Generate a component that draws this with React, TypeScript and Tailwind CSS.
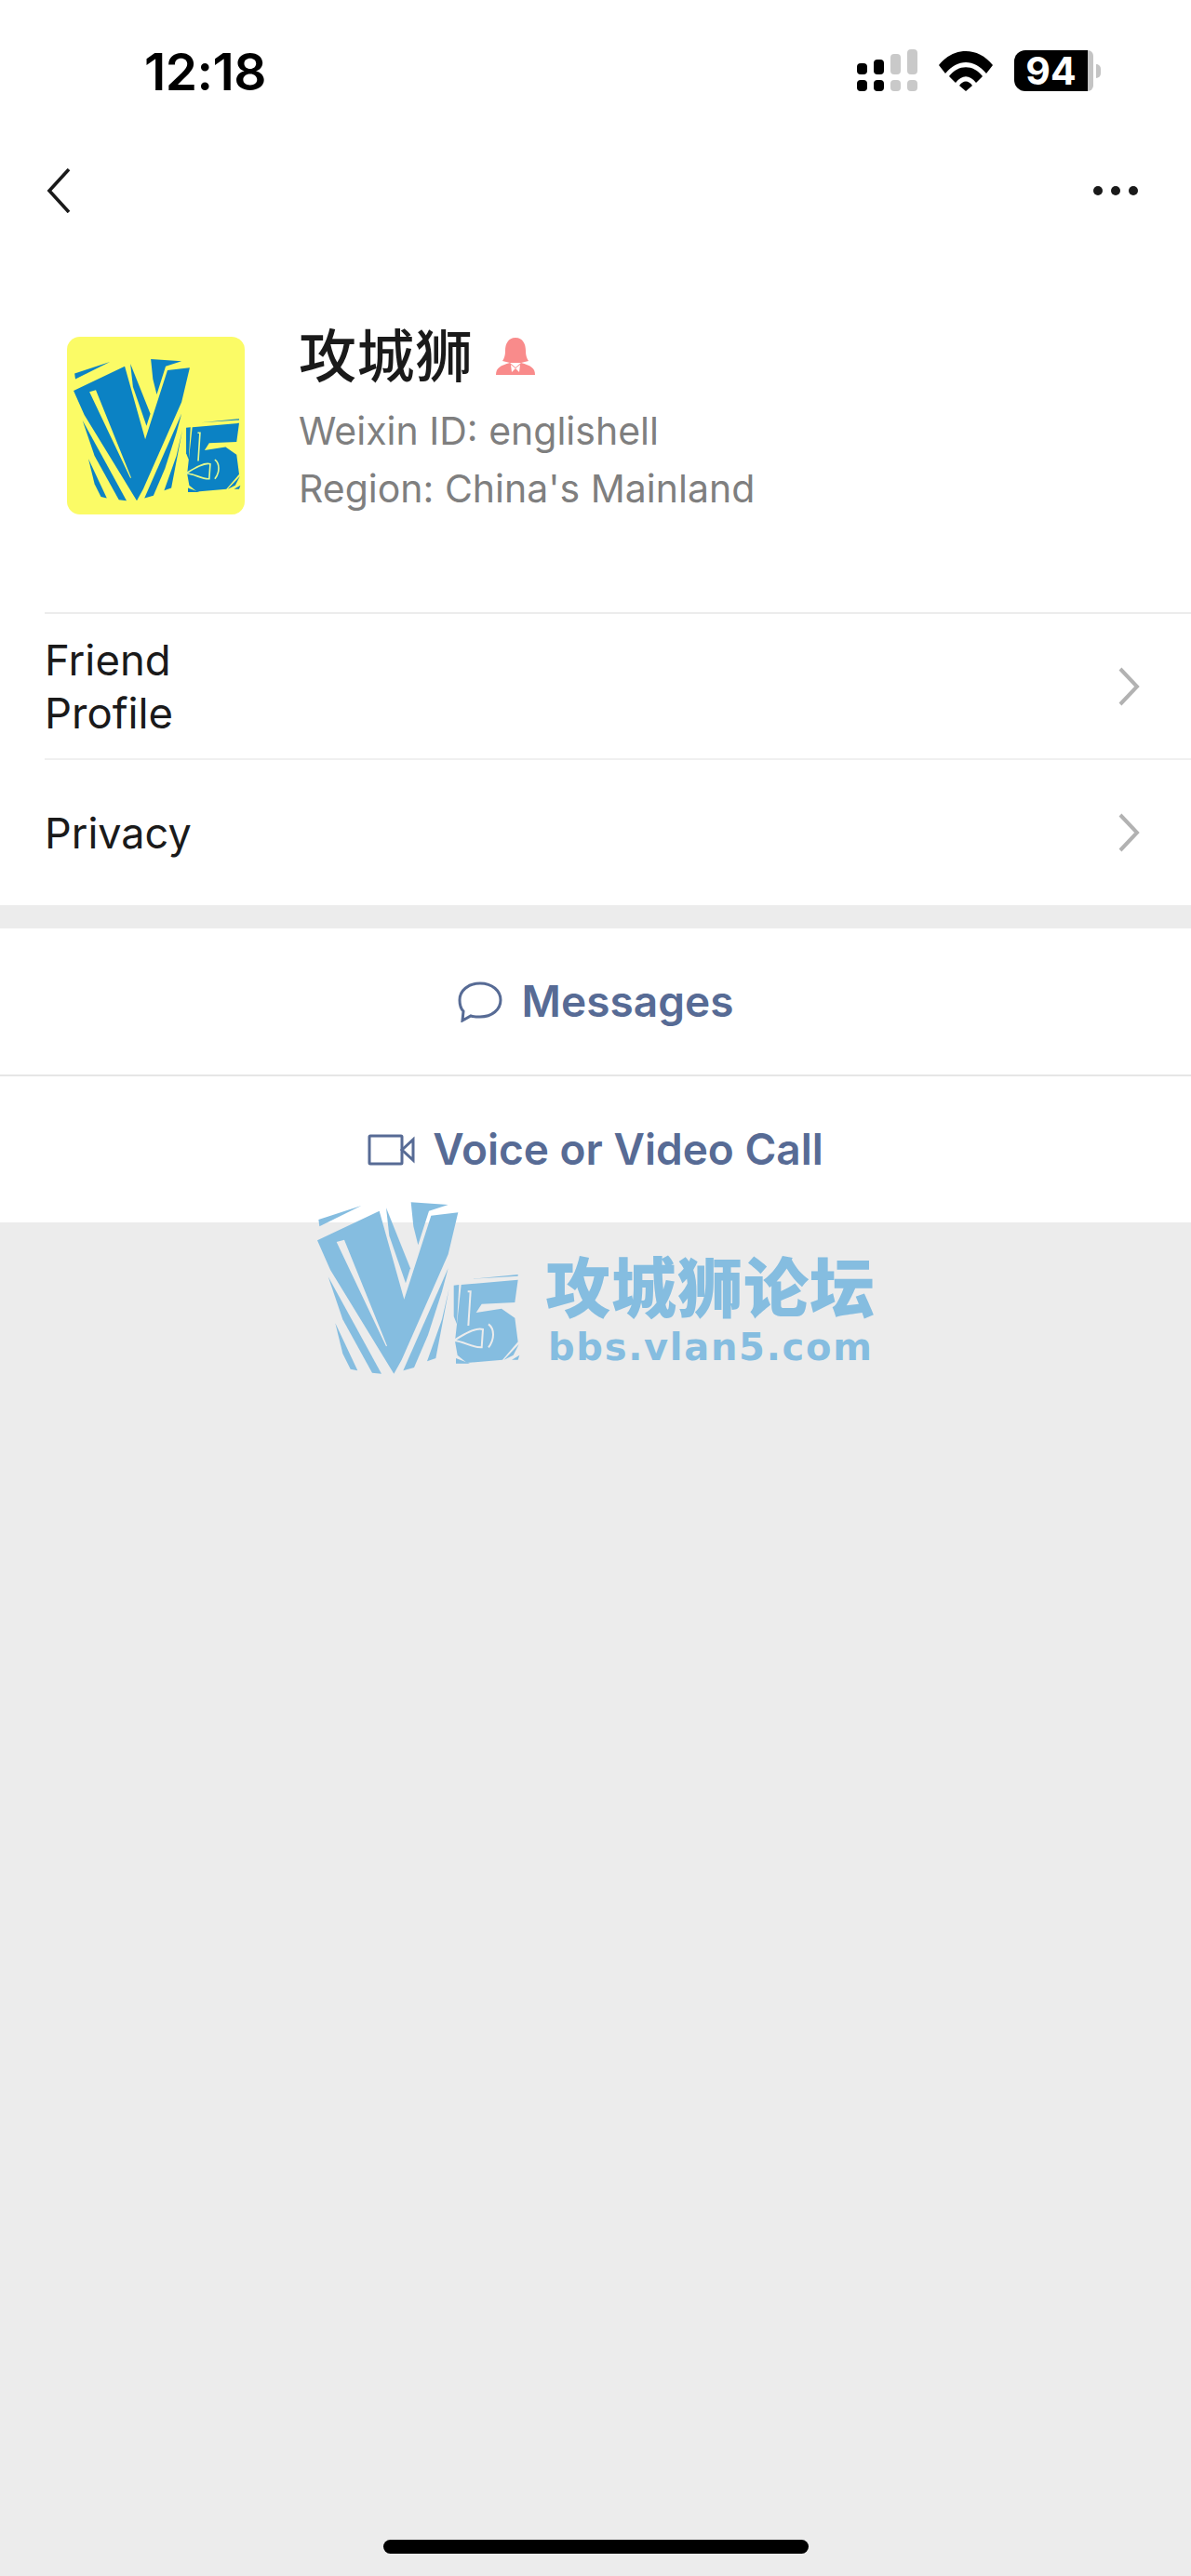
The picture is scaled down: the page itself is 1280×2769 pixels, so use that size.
import React from "react";

// V5 mark, traced in a 690x600 box
const V5Logo: React.FC<{ fill: string; hole: string; className: string }> = ({ fill, hole, className }) => (
  <svg viewBox="0 0 690 600" className={className} fill={fill}>
    <polygon points="22,78 160,33 25,100" />
    <path
      fillRule="evenodd"
      d="M18,145 L218,50 L298,335 L385,65 L472,55 L440,190 L290,530 L265,575 L60,240 Z M80,150 L105,143 L243,485 L240,487 Z"
    />
    <polygon points="240,40 318,235 303,283 250,130" />
    <polygon points="320,22 440,30 378,50 343,160 328,100" />
    <polygon points="53,262 140,420 225,575 195,572 100,400" />
    <polygon points="76,412 148,565 125,560 100,510" />
    <polygon points="440,235 295,565 330,555 375,450 420,310" />
    <polygon points="443,300 400,525 372,535 420,400" />
    {/* the 5 */}
    <polygon points="515,270 665,255 665,260 540,268" />
    <polygon points="458,290 475,288 468,415 458,390" />
    <polygon points="482,288 665,272 655,345 548,350 530,378 612,365 655,395 665,472 615,530 500,540 470,515 462,470" />
    <polygon points="465,525 510,542 465,542" />
    <polygon points="620,530 668,480 650,515" />
    <polygon points="645,530 670,515 665,530" />
    <g fill="none" stroke={hole} strokeWidth="6">
      <path d="M503,310 L512,310 L505,420" />
      <path d="M458,468 C495,445 530,425 552,432 L548,490 C520,492 490,470 458,468 Z" />
      <path d="M570,415 C590,430 590,465 570,490" />
    </g>
  </svg>
);

const Chevron = () => (
  <svg viewBox="0 0 24 42" className="w-[24px] h-[42px]" fill="none" stroke="#b2b2b2" strokeWidth="4">
    <path d="M3,2 L21,21 L3,40" />
  </svg>
);

const StatusIcons = () => (
  <div className="flex items-center">
    <svg viewBox="0 0 66 46" className="w-[66px] h-[46px]">
      <rect x="0" y="15" width="11" height="12" rx="4" fill="#000" />
      <rect x="18" y="11" width="11" height="16" rx="4" fill="#000" />
      <rect x="36" y="5" width="11" height="22" rx="4" fill="#c9c9c9" />
      <rect x="54" y="0" width="11" height="27" rx="4" fill="#c9c9c9" />
      <rect x="0" y="33" width="11" height="12" rx="4" fill="#000" />
      <rect x="18" y="33" width="11" height="12" rx="4" fill="#000" />
      <rect x="36" y="33" width="11" height="12" rx="4" fill="#c9c9c9" />
      <rect x="54" y="33" width="11" height="12" rx="4" fill="#c9c9c9" />
    </svg>
    <svg viewBox="0 0 58 44" className="w-[58px] h-[44px] ml-[22px]" fill="#000">
      <path d="M0,16 C16,-4 42,-4 58,16 L51,25 C38,9 20,9 7,25 Z" />
      <path d="M11,28 C21,15 37,15 47,28 L40,35 C33,26 25,26 18,35 Z" />
      <path d="M22,38 C26,32 32,32 36,38 L29,44 Z" />
    </svg>
    <div className="ml-[23px] flex">
      <div className="w-[79px] h-[44px] rounded-l-[12px] bg-black flex items-center justify-center text-white text-[41px] font-bold leading-none font-['Inter',sans-serif]">
        94
      </div>
      <div className="w-[6px] h-[44px] rounded-r-[12px] bg-[#c4c4c4]" />
    </div>
    <div className="ml-[3px] w-[5px] h-[15px] rounded-r-full bg-[#c4c4c4]" />
  </div>
);

export default function App() {
  return (
    <div className="relative min-h-[2769px] bg-[#ececec] font-['Inter','Noto_Sans_CJK_SC',sans-serif] overflow-hidden">
      <div className="bg-white">
        {/* status bar */}
        <div className="h-[150px] pt-[47px] pl-[155px] pr-[97px] flex justify-between items-start">
          <span className="text-[55px] leading-[60px] font-semibold text-black font-['Inter',sans-serif] tracking-[-0.5px]">12:18</span>
          <div className="pt-[6px]">
            <StatusIcons />
          </div>
        </div>

        {/* nav */}
        <div className="h-[110px] px-[50px] flex items-center justify-between">
          <svg viewBox="0 0 26 48" className="w-[26px] h-[48px]" fill="none" stroke="#1a1a1a" strokeWidth="3.6">
            <path d="M24,1 L3,24 L24,47" />
          </svg>
          <div className="flex gap-[9px] mr-[7px]">
            <span className="w-[10px] h-[10px] rounded-full bg-[#1a1a1a]" />
            <span className="w-[10px] h-[10px] rounded-full bg-[#1a1a1a]" />
            <span className="w-[10px] h-[10px] rounded-full bg-[#1a1a1a]" />
          </div>
        </div>

        {/* profile */}
        <div className="h-[398px] pl-[72px] pt-[102px] flex items-start">
          <div className="w-[191px] h-[191px] rounded-[14px] bg-[#fbfb66] pt-[18px] pl-[2px]">
            <V5Logo fill="#0b82c4" hole="#e4f98e" className="w-[190px] h-[165px]" />
          </div>
          <div className="ml-[58px] -mt-[14px]">
            <div className="flex items-center h-[70px]">
              <span className="self-start text-[62px] leading-[62px] font-medium text-[#1a1a1a] tracking-[0.5px] font-['Noto_Sans_CJK_SC',sans-serif]">攻城狮</span>
              <svg viewBox="0 0 42 40" className="w-[42px] h-[40px] ml-[24px]" fill="#f98b8b">
                <path d="M21,0 C29,0 32,7 32,14 C32,19 33,22 35,25 L27,27 L15,27 L7,25 C9,22 10,19 10,14 C10,7 13,0 21,0 Z" />
                <path d="M0,40 C0,32 5,30 15,27 L21,32 L27,27 C37,30 42,32 42,40 Z" />
                <polygon points="21,33 16,29 17,37" fill="#fff" />
                <polygon points="21,33 26,29 25,37" fill="#fff" />
              </svg>
            </div>
            <p className="mt-[14px] text-[41px] leading-[62px] text-[#7f7f7f]">Weixin ID: englishell</p>
            <p className="text-[41px] leading-[62px] text-[#7f7f7f]">Region: China's Mainland</p>
          </div>
        </div>

        {/* rows */}
        <div className="ml-[48px] border-t-2 border-[#ececec] h-[157px] flex items-center justify-between pr-[55px]">
          <span className="text-[45.5px] leading-[57px] text-[#1a1a1a]">Friend<br />Profile</span>
          <Chevron />
        </div>
        <div className="ml-[48px] border-t-2 border-[#f0f0f0] h-[158px] flex items-center justify-between pr-[55px]">
          <span className="text-[45px] leading-[57px] text-[#1a1a1a]">Privacy</span>
          <Chevron />
        </div>
      </div>

      {/* actions */}
      <div className="mt-[25px] bg-white">
        <div className="h-[157px] flex items-center justify-center gap-[21px] text-[46px] font-semibold text-[#576b95]">
          <svg viewBox="0 0 48 44" className="w-[48px] h-[44px]" fill="none" stroke="#576b95" strokeWidth="3">
            <path d="M24,2 C37,2 46,10 46,20 C46,30 37,38 24,38 C20,38 17,38 14,37 L5,42 L6,32 C3,29 2,25 2,20 C2,10 11,2 24,2 Z" />
          </svg>
          Messages
        </div>
        <div className="border-t-2 border-[#e6e6e6] h-[159px] flex items-center justify-center gap-[18px] text-[46px] font-semibold text-[#576b95]">
          <svg viewBox="0 0 52 34" className="w-[52px] h-[34px]" fill="none" stroke="#576b95" strokeWidth="3">
            <rect x="2" y="2" width="35" height="30" rx="1" />
            <path d="M37,17 L49,6 L49,28 Z" />
          </svg>
          Voice or Video Call
        </div>
      </div>

      {/* watermark */}
      <div className="absolute left-[335px] top-[1285px] flex items-start">
        <V5Logo fill="#85bde0" hole="#ececec" className="w-[230px] h-[200px]" />
        <div className="ml-[21px] mt-[64px] text-[#85bde0]">
          <div className="text-[70px] leading-[76px] font-black tracking-[1px] whitespace-nowrap font-['Liberation_Sans','Noto_Sans_CJK_SC',sans-serif]">攻城狮论坛</div>
          <div className="ml-[3px] text-[40px] leading-[46px] font-bold tracking-[1.7px] whitespace-nowrap font-['DejaVu_Sans',sans-serif]">bbs.vlan5.com</div>
        </div>
      </div>

      {/* home indicator */}
      <div className="absolute left-[412px] top-[2730px] w-[457px] h-[15px] rounded-full bg-black" />
    </div>
  );
}
